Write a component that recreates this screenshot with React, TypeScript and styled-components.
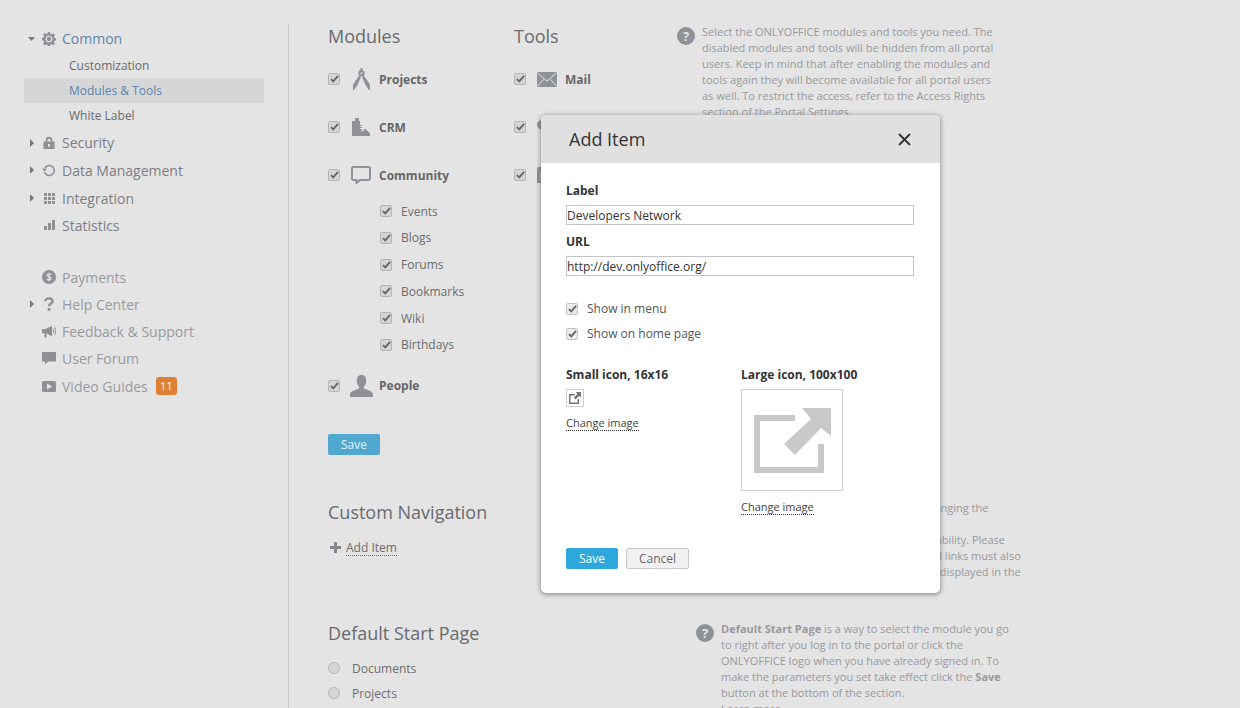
import React, { FC } from "react";
import styled, { createGlobalStyle } from "styled-components";

const GlobalStyle = createGlobalStyle`
  html, body {
    margin: 0;
    padding: 0;
    height: 100%;
    overflow: hidden;
    background: #e4e4e4;
    font-family: "Open Sans", "DejaVu Sans", sans-serif;
    font-size: 12px;
    color: #666;
  }
`;

const Page = styled.div`
  position: relative;
  display: flex;
  width: 1240px;
  height: 708px;
  padding: 24px 0 0 24px;
  box-sizing: border-box;
  overflow: hidden;
`;

/* sidebar */
const Sidebar = styled.nav`
  width: 240px;
  flex: none;
  padding-top: 1px;
`;

const NavRow = styled.div<{ $muted?: boolean; $active?: boolean }>`
  display: flex;
  align-items: center;
  height: ${(p) => (p.$muted ? 27.3 : 27.75)}px;
  font-size: 14px;
  color: ${(p) => (p.$active ? "#5b84ad" : p.$muted ? "#989a9f" : "#7c7e84")};
`;

const Caret = styled.span`
  width: 15px;
  flex: none;
  display: flex;
  justify-content: center;
`;

const NavIcon = styled.span`
  width: 20px;
  flex: none;
  display: flex;
  justify-content: center;
  color: #8e9095;
  margin-right: 3px;
`;

const SubRow = styled.div<{ $active?: boolean }>`
  height: 25px;
  line-height: 25px;
  padding-left: 45px;
  font-size: 12px;
  color: ${(p) => (p.$active ? "#5b84ad" : "#6a6a6a")};
  background: ${(p) => (p.$active ? "#d6d6d6" : "transparent")};
`;

const NavGroup = styled.div<{ $gap: number }>`
  margin-top: ${(p) => p.$gap}px;
`;

const Badge = styled.span`
  margin-left: 8px;
  width: 21px;
  height: 18px;
  border-radius: 3px;
  background: #df7f34;
  color: #fff;
  font-size: 11px;
  line-height: 18px;
  text-align: center;
`;

/* main column */
const Divider = styled.div`
  width: 1px;
  flex: none;
  margin-left: 24px;
  background: #c9c9c9;
`;

const Main = styled.main`
  flex: 1;
  padding-left: 39px;
`;

const Section = styled.section<{ $top: number; $left: number }>`
  display: grid;
  grid-template-columns: ${(p) => p.$left}px 310px;
  margin-top: ${(p) => p.$top}px;
`;

const Heading = styled.h2`
  margin: 0;
  font-size: 18px;
  line-height: 24px;
  font-weight: 400;
  color: #686a70;
  white-space: nowrap;
`;

const Columns = styled.div`
  display: flex;
`;

const ModulesCol = styled.div`
  width: 186px;
`;

const ModuleRow = styled.div`
  display: flex;
  align-items: center;
  height: 48px;
`;

const ModuleIcon = styled.span`
  width: 39px;
  height: 24px;
  flex: none;
  display: flex;
  align-items: center;
  justify-content: center;
  padding-left: 3px;
  box-sizing: border-box;
  color: #8f9196;
`;

const ModuleLabel = styled.span`
  font-size: 12px;
  font-weight: 700;
  color: #666;
`;

const FirstRows = styled.div`
  margin-top: 7px;
`;

const SubList = styled.div`
  padding-left: 52px;
  margin: -1.4px 0 3.4px;
`;

const SubModule = styled.div`
  display: flex;
  align-items: center;
  height: 26.8px;
  gap: 9px;
  color: #6c6c6c;
`;

const Check = styled.span<{ $light?: boolean }>`
  width: 12px;
  height: 12px;
  box-sizing: border-box;
  flex: none;
  display: flex;
  align-items: center;
  justify-content: center;
  border: 1px solid ${(p) => (p.$light ? "#c4c4c4" : "#b5b5b5")};
  border-radius: 2px;
  background: ${(p) => (p.$light ? "#ececec" : "#d5d5d5")};
`;

const Radio = styled.span`
  width: 12px;
  height: 12px;
  box-sizing: border-box;
  flex: none;
  border: 1px solid #b7b7b7;
  border-radius: 50%;
  background: #d6d6d6;
`;

const SaveMuted = styled.div`
  width: 52px;
  height: 21px;
  margin-top: 24px;
  border-radius: 2px;
  background: #50a8d0;
  color: #e4f1f7;
  text-align: center;
  line-height: 21px;
  font-size: 12px;
`;

const Help = styled.div`
  display: flex;
  align-items: flex-start;
  gap: 7px;
  font-size: 11px;
  line-height: 16px;
  color: #98999d;
  white-space: nowrap;
`;

const HelpMark = styled.span`
  width: 18px;
  height: 18px;
  flex: none;
  margin-top: 3px;
  border-radius: 50%;
  background: #8f9196;
  color: #e4e4e4;
  font-size: 13px;
  font-weight: 700;
  line-height: 18px;
  text-align: center;
`;

const ClippedHelp = styled(Help)`
  height: 96px;
`;

const AddRow = styled.div`
  display: flex;
  align-items: center;
  gap: 5px;
  margin-top: 14px;
  padding-left: 2px;
  height: 20px;
  color: #6c6c6c;
`;

const Dotted = styled.span`
  line-height: 15px;
  border-bottom: 1px dotted #666;
  color: #6c6c6c;
`;

const ChangeLink = styled.span`
  font-size: 11px;
  line-height: 15px;
  border-bottom: 1px dotted #333;
  color: #444;
`;

const RadioList = styled.div`
  margin-top: 11px;
`;

const RadioRow = styled.div`
  display: flex;
  align-items: center;
  gap: 12px;
  height: 25px;
  color: #6c6c6c;
`;

/* dialog */
const Dialog = styled.div`
  position: absolute;
  left: 541px;
  top: 115px;
  width: 399px;
  border-radius: 5px;
  background: #fff;
  overflow: hidden;
  box-shadow: 0 1px 4px 1px rgba(90, 90, 90, 0.55);
  color: #444;
`;

const DialogHeader = styled.div`
  height: 48px;
  display: flex;
  align-items: center;
  justify-content: space-between;
  padding: 0 29px 0 28px;
  background: #e0e0e0;
  font-size: 18px;
  color: #333;
`;

const DialogBody = styled.div`
  padding: 20px 26px 24px 25px;
`;

const FieldLabel = styled.div<{ $top?: number }>`
  font-weight: 700;
  font-size: 12px;
  line-height: 16px;
  color: #333;
  margin-top: ${(p) => p.$top ?? 0}px;
`;

const Field = styled.div`
  height: 18px;
  margin-top: 6px;
  border: 1px solid #c5c5c5;
  line-height: 19px;
  font-size: 12px;
  color: #333;
`;

const OptionList = styled.div`
  margin-top: 20px;
`;

const OptionRow = styled.div`
  display: flex;
  align-items: center;
  gap: 9px;
  height: 25px;
  color: #555;
`;

const IconColumns = styled.div`
  display: flex;
  margin-top: 21px;
`;

const IconCol = styled.div`
  width: 175px;
  flex: none;
`;

const IconBox = styled.div<{ $size: number }>`
  width: ${(p) => p.$size}px;
  height: ${(p) => p.$size}px;
  margin: 6px 0 7px;
  border: 1px solid #cfcfcf;
  display: flex;
  align-items: center;
  justify-content: center;
  box-sizing: border-box;
`;

const Buttons = styled.div`
  display: flex;
  gap: 8px;
  margin-top: 33px;
`;

const PrimaryButton = styled.div`
  width: 52px;
  height: 21px;
  border-radius: 2px;
  background: #2ea7dd;
  color: #fff;
  text-align: center;
  line-height: 21px;
`;

const GhostButton = styled.div`
  width: 61px;
  height: 19px;
  border: 1px solid #c9c9c9;
  border-radius: 2px;
  background: #f1f1f1;
  color: #666;
  text-align: center;
  line-height: 19px;
`;

/* drawings */
const CaretRight = () => (
  <svg width="4" height="8" viewBox="0 0 4 8">
    <path d="M0 0l4 4-4 4z" fill="#77797e" />
  </svg>
);

const CaretDown = () => (
  <svg width="7" height="4" viewBox="0 0 7 4">
    <path d="M0 0h7L3.500 4z" fill="#77797e" />
  </svg>
);

const Tick = () => (
  <svg width="9" height="8" viewBox="0 0 10 9">
    <path d="M1 4.600l2.600 2.600L9 1" fill="none" stroke="#666" strokeWidth="2.200" />
  </svg>
);

const GearIcon = () => (
  <svg width="14" height="14" viewBox="0 0 15 15" fill="currentColor">
    <path d="M6.300 0h2.400l.3 2 1.500.6L12.200 1.400l1.700 1.700-1.200 1.700.6 1.500 1.700.4v2.400l-1.700.3-.6 1.500 1.200 1.700-1.700 1.700-1.700-1.200-1.500.6-.3 1.700H6.300L6 13.800l-1.500-.6-1.700 1.200-1.700-1.700 1.200-1.700-.6-1.500L0 8.700V6.300l1.700-.4.6-1.500-1.200-1.700 1.700-1.700 1.700 1.200L6 1.600z" />
    <circle cx="7.500" cy="7.500" r="3.600" fill="#e4e4e4" />
    <circle cx="7.500" cy="7.500" r="2.300" />
  </svg>
);

const LockIcon = () => (
  <svg width="12" height="13" viewBox="0 0 13 14" fill="currentColor">
    <path d="M3 6V4.400a3.500 3.500 0 017 0V6H8V4.400a1.500 1.500 0 00-3 0V6z" />
    <path d="M.5 6h12v8H.5zM5.500 8.500v3h2v-3z" fillRule="evenodd" />
  </svg>
);

const RestoreIcon = () => (
  <svg width="14" height="13" viewBox="0 0 14 13" fill="none">
    <path d="M3 4a5 5 0 11-.4 4" stroke="currentColor" strokeWidth="1.600" />
    <path d="M0 4.600h5L2.800 7.400z" fill="currentColor" />
  </svg>
);

const GridIcon = () => (
  <svg width="11" height="11" viewBox="0 0 11 11" fill="currentColor">
    {[0, 4, 8].map((y) =>
      [0, 4, 8].map((x) => <rect key={`${x}-${y}`} x={x} y={y} width="3" height="3" />)
    )}
  </svg>
);

const BarsIcon = () => (
  <svg width="11" height="11" viewBox="0 0 11 11" fill="currentColor">
    <rect x="0" y="6" width="3" height="4" />
    <rect x="4" y="3" width="3" height="7" />
    <rect x="8" y="0" width="3" height="10" />
  </svg>
);

const DollarIcon = () => (
  <svg width="14" height="14" viewBox="0 0 14 14">
    <circle cx="7" cy="7" r="7" fill="currentColor" />
    <path d="M9.300 4.700C8.400 3.800 5 3.600 5 5.300c0 1.900 4.200 1.200 4.200 3.300 0 1.700-3.400 1.500-4.500.6M7 2.800v8.400" fill="none" stroke="#e4e4e4" strokeWidth="1.200" />
  </svg>
);

const QuestionIcon = () => (
  <svg width="10" height="14" viewBox="0 0 10 14" fill="none">
    <path d="M1.300 4.200C1.300 2.400 3 1.400 5 1.400s3.600 1 3.600 2.800C8.600 6.500 5 6.500 5 9.200" stroke="currentColor" strokeWidth="2.400" />
    <rect x="3.700" y="11" width="2.700" height="2.800" fill="currentColor" />
  </svg>
);

const MegaphoneIcon = () => (
  <svg width="14" height="13" viewBox="0 0 14 13" fill="currentColor">
    <path d="M0 4h3.500L10 .8v10.400L4.500 8.500V12.500H2.500V8.300H0z" />
    <path d="M11 3.500c1 .8 1 4 0 4.800M12.500 2.200c1.800 1.500 1.800 6.100 0 7.600" fill="none" stroke="currentColor" />
  </svg>
);

const ForumIcon = () => (
  <svg width="14" height="13" viewBox="0 0 14 13" fill="currentColor">
    <path d="M0 0h14v9.500H6L3 12.500V9.500H0z" />
  </svg>
);

const PlayIcon = () => (
  <svg width="14" height="11" viewBox="0 0 14 11">
    <rect width="14" height="11" rx="1.500" fill="currentColor" />
    <path d="M5 2.500l5 3-5 3z" fill="#e4e4e4" />
  </svg>
);

const CompassIcon = () => (
  <svg width="17" height="22" viewBox="0 0 17 22" fill="currentColor">
    <rect x="7.500" y="0" width="2" height="3" />
    <path d="M8.500 2a3.200 3.200 0 110 6.400 3.200 3.200 0 010-6.400zm0 2.200a1 1 0 100 2 1 1 0 000-2z" fillRule="evenodd" />
    <path d="M6.200 7.500L8 9.200 4.200 17.500 1 22H0v-5.500zM10.800 7.500L9 9.200l3.800 8.300L16 22h1v-5.500z" />
  </svg>
);

const BuildingIcon = () => (
  <svg width="18" height="18" viewBox="0 0 18 18" fill="currentColor">
    <path d="M0 3h3V0h4v3h1v8.500l2.400 2.200L13 10.500l5 5V18H0z" />
    <path d="M8 7h2v1H8zM8 9h2v1H8zM8 11h2v1H8z" />
  </svg>
);

const BubbleIcon = () => (
  <svg width="20" height="18" viewBox="0 0 20 18" fill="none">
    <path d="M2.500 1h15A1.500 1.500 0 0119 2.500v10a1.500 1.500 0 01-1.500 1.500H9l-3.500 3v-3h-3A1.500 1.500 0 011 12.500v-10A1.500 1.500 0 012.500 1z" stroke="currentColor" strokeWidth="2" />
  </svg>
);

const PersonIcon = () => (
  <svg width="23" height="22" viewBox="0 0 23 22" fill="currentColor">
    <path d="M11.500 0c3.200 0 4.700 2.400 4.700 5.400 0 2.800-1 5.100-2.400 6.300v1.700c3.200 1.400 9.200 2.700 9.200 6V22H0v-2.600c0-3.300 6-4.600 9.200-6v-1.700C7.800 10.500 6.800 8.200 6.800 5.400 6.800 2.400 8.300 0 11.500 0z" />
  </svg>
);

const MailIcon = () => (
  <svg width="20" height="15" viewBox="0 0 20 15">
    <rect width="20" height="15" rx="1" fill="currentColor" />
    <path d="M.5 1L10 9l9.500-8M.5 14l6-6.500M19.500 14l-6-6.500" fill="none" stroke="#e4e4e4" />
  </svg>
);

const TalkIcon = () => (
  <svg width="20" height="16" viewBox="0 0 20 16" fill="currentColor">
    <path d="M8 0c4.400 0 8 2.500 8 5.800s-3.600 5.800-8 5.800H6.500L5 14v-3C2 10.200 0 8.200 0 5.800 0 2.500 3.600 0 8 0z" />
  </svg>
);

const CalendarIcon = () => (
  <svg width="20" height="16" viewBox="0 0 20 16" fill="currentColor">
    <path d="M0 2a2 2 0 012-2h16a2 2 0 012 2v14H0zM3.500 5v9h13V5z" fillRule="evenodd" />
  </svg>
);

const PlusIcon = () => (
  <svg width="11" height="11" viewBox="0 0 11 11">
    <path d="M4 0h3v4h4v3H7v4H4V7H0V4h4z" fill="#85878c" />
  </svg>
);

const CloseIcon = () => (
  <svg width="13" height="13" viewBox="0 0 13 13">
    <path d="M1 1l11 11M12 1L1 12" stroke="#333" strokeWidth="1.800" fill="none" />
  </svg>
);

const LargeLinkIcon = () => (
  <svg width="77" height="65" viewBox="0 0 77 65" fill="#c9c9c9">
    <path d="M0 7h41v6H6v46h58V36h6v29H0z" />
    <path d="M48 0h29v28L67 20 41 47 30 36 57 11z" />
  </svg>
);

const SmallLinkIcon = () => (
  <svg width="12" height="12" viewBox="0 0 12 12" fill="#777">
    <path d="M0 2h6v1.500H1.500v7h7V7H10v5H0z" />
    <path d="M6.500 0H12v5.500L10.200 4 6.500 7.500 4.800 5.800 8.500 2z" />
  </svg>
);

const sideTop = [
  { label: "Security", icon: <LockIcon /> },
  { label: "Data Management", icon: <RestoreIcon /> },
  { label: "Integration", icon: <GridIcon /> },
];

const subModules = ["Events", "Blogs", "Forums", "Bookmarks", "Wiki", "Birthdays"];

const App: FC = () => {
  return (
    <Page>
      <GlobalStyle />
      <Sidebar>
        <NavRow $active>
          <Caret>
            <CaretDown />
          </Caret>
          <NavIcon>
            <GearIcon />
          </NavIcon>
          Common
        </NavRow>
        <SubRow>Customization</SubRow>
        <SubRow $active>Modules &amp; Tools</SubRow>
        <SubRow>White Label</SubRow>
        <NavGroup $gap={1}>
          {sideTop.map((item) => (
            <NavRow key={item.label}>
              <Caret>
                <CaretRight />
              </Caret>
              <NavIcon>{item.icon}</NavIcon>
              {item.label}
            </NavRow>
          ))}
          <NavRow>
            <Caret />
            <NavIcon>
              <BarsIcon />
            </NavIcon>
            Statistics
          </NavRow>
        </NavGroup>
        <NavGroup $gap={23.7}>
          <NavRow $muted>
            <Caret />
            <NavIcon>
              <DollarIcon />
            </NavIcon>
            Payments
          </NavRow>
          <NavRow $muted>
            <Caret>
              <CaretRight />
            </Caret>
            <NavIcon>
              <QuestionIcon />
            </NavIcon>
            Help Center
          </NavRow>
          <NavRow $muted>
            <Caret />
            <NavIcon>
              <MegaphoneIcon />
            </NavIcon>
            Feedback &amp; Support
          </NavRow>
          <NavRow $muted>
            <Caret />
            <NavIcon>
              <ForumIcon />
            </NavIcon>
            User Forum
          </NavRow>
          <NavRow $muted>
            <Caret />
            <NavIcon>
              <PlayIcon />
            </NavIcon>
            Video Guides
            <Badge>11</Badge>
          </NavRow>
        </NavGroup>
      </Sidebar>

      <Divider />

      <Main>
        <Section $top={0} $left={349}>
          <div>
            <Columns>
              <ModulesCol>
                <Heading>Modules</Heading>
                <FirstRows>
                  <ModuleRow>
                    <Check>
                      <Tick />
                    </Check>
                    <ModuleIcon>
                      <CompassIcon />
                    </ModuleIcon>
                    <ModuleLabel>Projects</ModuleLabel>
                  </ModuleRow>
                  <ModuleRow>
                    <Check>
                      <Tick />
                    </Check>
                    <ModuleIcon>
                      <BuildingIcon />
                    </ModuleIcon>
                    <ModuleLabel>CRM</ModuleLabel>
                  </ModuleRow>
                  <ModuleRow>
                    <Check>
                      <Tick />
                    </Check>
                    <ModuleIcon>
                      <BubbleIcon />
                    </ModuleIcon>
                    <ModuleLabel>Community</ModuleLabel>
                  </ModuleRow>
                  <SubList>
                    {subModules.map((name) => (
                      <SubModule key={name}>
                        <Check>
                          <Tick />
                        </Check>
                        {name}
                      </SubModule>
                    ))}
                  </SubList>
                  <ModuleRow>
                    <Check>
                      <Tick />
                    </Check>
                    <ModuleIcon>
                      <PersonIcon />
                    </ModuleIcon>
                    <ModuleLabel>People</ModuleLabel>
                  </ModuleRow>
                </FirstRows>
              </ModulesCol>
              <div>
                <Heading>Tools</Heading>
                <FirstRows>
                  <ModuleRow>
                    <Check>
                      <Tick />
                    </Check>
                    <ModuleIcon>
                      <MailIcon />
                    </ModuleIcon>
                    <ModuleLabel>Mail</ModuleLabel>
                  </ModuleRow>
                  <ModuleRow>
                    <Check>
                      <Tick />
                    </Check>
                    <ModuleIcon>
                      <TalkIcon />
                    </ModuleIcon>
                    <ModuleLabel>Talk</ModuleLabel>
                  </ModuleRow>
                  <ModuleRow>
                    <Check>
                      <Tick />
                    </Check>
                    <ModuleIcon>
                      <CalendarIcon />
                    </ModuleIcon>
                    <ModuleLabel>Calendar</ModuleLabel>
                  </ModuleRow>
                </FirstRows>
              </div>
            </Columns>
            <SaveMuted>Save</SaveMuted>
          </div>
          <Help>
            <HelpMark>?</HelpMark>
            <div>
              Select the ONLYOFFICE modules and tools you need. The
              <br />
              disabled modules and tools will be hidden from all portal
              <br />
              users. Keep in mind that after enabling the modules and
              <br />
              tools again they will become available for all portal users
              <br />
              as well. To restrict the access, refer to the Access Rights
              <br />
              section of the Portal Settings.
            </div>
          </Help>
        </Section>

        <Section $top={45} $left={368}>
          <div>
            <Heading>Custom Navigation</Heading>
            <AddRow>
              <PlusIcon />
              <Dotted>Add Item</Dotted>
            </AddRow>
          </div>
          <ClippedHelp>
            <HelpMark>?</HelpMark>
            <div>
              Custom Navigation lets you add link by changing the
              <br />
              portal menu.
              <br />
              Add your own items, and extend portal usability. Please
              <br />
              note that all the addresses of all you added links must also
              <br />
              all be valid, or else those simply cannot be displayed in the
            </div>
          </ClippedHelp>
        </Section>

        <Section $top={25} $left={368}>
          <div>
            <Heading>Default Start Page</Heading>
            <RadioList>
              <RadioRow>
                <Radio />
                Documents
              </RadioRow>
              <RadioRow>
                <Radio />
                Projects
              </RadioRow>
            </RadioList>
          </div>
          <Help>
            <HelpMark>?</HelpMark>
            <div>
              <b>Default Start Page</b> is a way to select the module you go
              <br />
              to right after you log in to the portal or click the
              <br />
              ONLYOFFICE logo when you have already signed in. To
              <br />
              make the parameters you set take effect click the <b>Save</b>
              <br />
              button at the bottom of the section.
              <br />
              Learn more...
            </div>
          </Help>
        </Section>
      </Main>

      <Dialog>
        <DialogHeader>
          Add Item
          <CloseIcon />
        </DialogHeader>
        <DialogBody>
          <FieldLabel>Label</FieldLabel>
          <Field>Developers Network</Field>
          <FieldLabel $top={9}>URL</FieldLabel>
          <Field>http://dev.onlyoffice.org/</Field>
          <OptionList>
            <OptionRow>
              <Check $light>
                <Tick />
              </Check>
              Show in menu
            </OptionRow>
            <OptionRow>
              <Check $light>
                <Tick />
              </Check>
              Show on home page
            </OptionRow>
          </OptionList>
          <IconColumns>
            <IconCol>
              <FieldLabel>Small icon, 16x16</FieldLabel>
              <IconBox $size={18}>
                <SmallLinkIcon />
              </IconBox>
              <ChangeLink>Change image</ChangeLink>
            </IconCol>
            <IconCol>
              <FieldLabel>Large icon, 100x100</FieldLabel>
              <IconBox $size={102}>
                <LargeLinkIcon />
              </IconBox>
              <ChangeLink>Change image</ChangeLink>
            </IconCol>
          </IconColumns>
          <Buttons>
            <PrimaryButton>Save</PrimaryButton>
            <GhostButton>Cancel</GhostButton>
          </Buttons>
        </DialogBody>
      </Dialog>
    </Page>
  );
};

export default App;
